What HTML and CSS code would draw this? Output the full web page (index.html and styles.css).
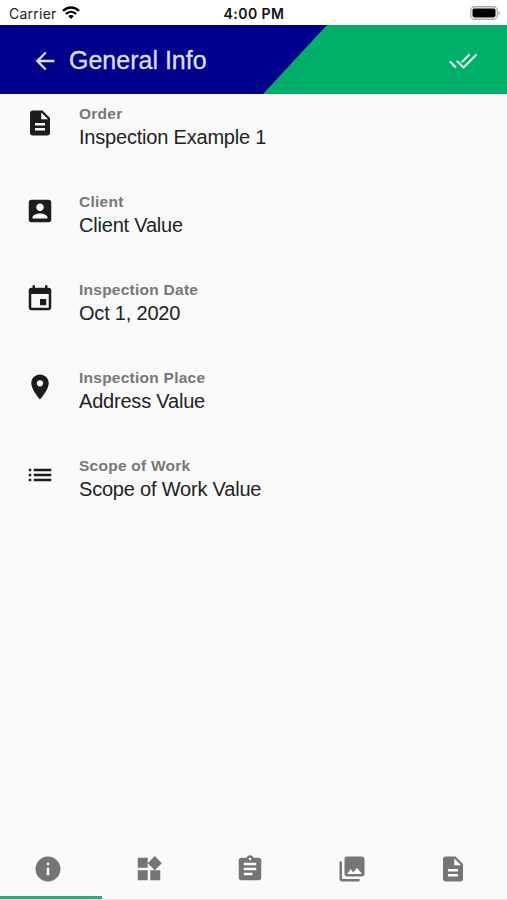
FILE: index.html
```html
<!DOCTYPE html>
<html lang="en">
<head>
<meta charset="utf-8">
<title>General Info</title>
<link rel="stylesheet" href="styles.css">
</head>
<body>
<div class="screen">
  <div class="status">
    <div class="carrier"><span class="carrier-name">Carrier</span>
      <svg class="wifi" viewBox="0 0 18 13"><g fill="none" stroke="#000" stroke-width="2.4"><path d="M1 4.9C5.6.3 12.4.3 17 4.9"/><path d="M3.9 8c3-2.900 7.200-2.900 10.200 0"/></g><path d="M9 13l-2.800-2.900c1.600-1.400 4-1.400 5.600 0z"/></svg>
    </div>
    <span class="clock">4:00 PM</span>
    <svg class="battery" viewBox="0 0 31 14"><rect x=".75" y=".75" width="26.500" height="12.500" rx="3.800" fill="#fff" stroke="#aaa" stroke-width="1.300"/><rect x="2.500" y="2.500" width="23" height="9" rx="2"/><path d="M28.500 4.800c2 .8 2 3.600 0 4.400z" fill="#aaa"/></svg>
  </div>
  <header class="header">
    <svg class="back" viewBox="0 0 24 24"><path d="M20 11H7.830l5.590-5.590L12 4l-8 8 8 8 1.410-1.410L7.830 13H20v-2z"/></svg>
    <h1 class="title">General Info</h1>
    <svg class="done" viewBox="0 0 30 18"><path d="M2.500 10l5 5M9.500 9.500l6 6L28 3M14.500 9.500L21 3"/></svg>
  </header>
  <main class="list">
    <section class="row">
      <svg class="icon" viewBox="0 0 24 24"><path d="M14 2H6c-1.100 0-2 .9-2 2v16c0 1.100.9 2 2 2h12c1.100 0 2-.9 2-2V8l-6-6zm2 16H8v-2h8v2zm0-4H8v-2h8v2zm-3-5V3.500L18.500 9H13z"/></svg>
      <div><div class="label">Order</div><div class="value">Inspection Example 1</div></div>
    </section>
    <section class="row">
      <svg class="icon" viewBox="0 0 24 24"><path d="M3 5v14c0 1.100.9 2 2 2h14c1.100 0 2-.9 2-2V5c0-1.100-.9-2-2-2H5c-1.100 0-2 .9-2 2zm12 4c0 1.660-1.340 3-3 3s-3-1.340-3-3 1.340-3 3-3 3 1.340 3 3zm-9 8c0-2 4-3.100 6-3.100s6 1.100 6 3.100v1H6v-1z"/></svg>
      <div><div class="label">Client</div><div class="value">Client Value</div></div>
    </section>
    <section class="row">
      <svg class="icon" viewBox="0 0 24 24"><path d="M17 12h-5v5h5v-5zM16 1v2H8V1H6v2H5c-1.110 0-1.990.9-1.990 2L3 19c0 1.100.89 2 2 2h14c1.100 0 2-.9 2-2V5c0-1.100-.9-2-2-2h-1V1h-2zm3 18H5V8h14v11z"/></svg>
      <div><div class="label">Inspection Date</div><div class="value">Oct 1, 2020</div></div>
    </section>
    <section class="row">
      <svg class="icon" viewBox="0 0 24 24"><path d="M12 2C8.130 2 5 5.130 5 9c0 5.250 7 13 7 13s7-7.750 7-13c0-3.870-3.130-7-7-7zm0 9.500a2.500 2.500 0 0 1 0-5 2.500 2.500 0 0 1 0 5z"/></svg>
      <div><div class="label">Inspection Place</div><div class="value">Address Value</div></div>
    </section>
    <section class="row">
      <svg class="icon" viewBox="0 0 24 24"><path d="M3 13h2v-2H3v2zm0 4h2v-2H3v2zm0-8h2V7H3v2zm4 4h14v-2H7v2zm0 4h14v-2H7v2zM7 7v2h14V7H7z"/></svg>
      <div><div class="label">Scope of Work</div><div class="value">Scope of Work Value</div></div>
    </section>
  </main>
  <nav class="tabs">
    <div class="tab active"><svg class="tab-icon" viewBox="0 0 24 24"><path d="M12 2C6.480 2 2 6.480 2 12s4.480 10 10 10 10-4.480 10-10S17.520 2 12 2zm1 15h-2v-6h2v6zm0-8h-2V7h2v2z"/></svg></div>
    <div class="tab"><svg class="tab-icon" viewBox="0 0 24 24"><path d="M13 13v8h8v-8h-8zM3 21h8v-8H3v8zM3 3v8h8V3H3zm13.660-1.310L11 7.340 16.660 13l5.660-5.660-5.660-5.650z"/></svg></div>
    <div class="tab"><svg class="tab-icon" viewBox="0 0 24 24"><path d="M19 3h-4.180C14.400 1.840 13.300 1 12 1c-1.300 0-2.400.84-2.820 2H5c-1.100 0-2 .9-2 2v14c0 1.100.9 2 2 2h14c1.100 0 2-.9 2-2V5c0-1.100-.9-2-2-2zm-7 0c.55 0 1 .45 1 1s-.45 1-1 1-1-.45-1-1 .45-1 1-1zm2 14H7v-2h7v2zm3-4H7v-2h10v2zm0-4H7V7h10v2z"/></svg></div>
    <div class="tab"><svg class="tab-icon" viewBox="0 0 24 24"><path d="M22 16V4c0-1.100-.9-2-2-2H8c-1.100 0-2 .9-2 2v12c0 1.100.9 2 2 2h12c1.100 0 2-.9 2-2zm-11-4l2.030 2.710L16 11l4 5H8l3-4zM2 6v14c0 1.100.9 2 2 2h14v-2H4V6H2z"/></svg></div>
    <div class="tab"><svg class="tab-icon" viewBox="0 0 24 24"><path d="M14 2H6c-1.100 0-2 .9-2 2v16c0 1.100.9 2 2 2h12c1.100 0 2-.9 2-2V8l-6-6zm2 16H8v-2h8v2zm0-4H8v-2h8v2zm-3-5V3.500L18.500 9H13z"/></svg></div>
  </nav>
</div>
</body>
</html>
```
FILE: styles.css
```css
* { box-sizing: border-box; }
body { margin: 0; background: #fafafa; font-family: "Liberation Sans", Arial, sans-serif; }
svg { display: block; flex: none; }
.screen { height: 900px; display: flex; flex-direction: column; overflow: hidden; }
.status { height: 25px; background: #fff; display: grid; grid-template-columns: 1fr auto 1fr; align-items: center; padding: 2px 6px 0 9px; }
.carrier { display: flex; align-items: center; gap: 5px; font: 14px/20px Inter, sans-serif; letter-spacing: .25px; color: #222; }
.wifi { width: 18px; height: 13px; margin-top: -2px; }
.clock { font: 600 14px/20px Inter, sans-serif; letter-spacing: .45px; margin-left: -2px; color: #111; }
.battery { width: 31px; height: 14px; justify-self: end; margin-top: -2px; }
.header { height: 69px; display: flex; align-items: center; padding: 2px 29px 0 31px; background: #00b068; position: relative; isolation: isolate; }
.header::before { content: ""; position: absolute; inset: 0; z-index: -1; background: #00008c; clip-path: polygon(0 0, 327px 0, 263px 100%, 0 100%); }
.back { width: 28px; height: 28px; fill: #dfdfff; }
.title { margin: -2px auto 0 10px; font-size: 25px; line-height: 30px; font-weight: 400; color: #dfdfff; -webkit-text-stroke: .3px #dfdfff; }
.done { width: 30px; height: 18px; fill: none; stroke: #d8ffec; stroke-width: 2.2; stroke-linecap: round; }
.list { flex: 1; padding-top: 10px; }
.row { height: 88px; display: flex; padding: 0 25px; gap: 24px; }
.icon { width: 30px; height: 30px; margin-top: 4px; fill: #1c1c1c; }
.label { font-size: 15.5px; line-height: 20px; letter-spacing: .25px; font-weight: 700; color: #777; }
.value { font-size: 20px; line-height: 26px; letter-spacing: -.2px; color: #222; }
.tabs { height: 60px; display: grid; grid-template-columns: repeat(5, 1fr); border-bottom: 1px solid #ddd; }
.tab { display: flex; justify-content: center; padding: 14px 6px 0 0; }
.tab-icon { width: 30px; height: 30px; fill: #757575; }
.active { border-bottom: 3px solid #27ae76; margin-right: -1px; padding-right: 7px; }
```
